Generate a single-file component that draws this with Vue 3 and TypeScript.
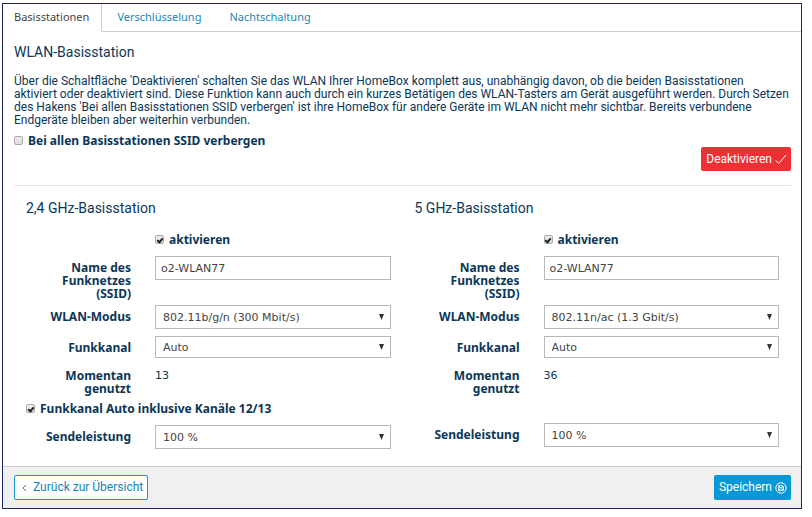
<script setup lang="ts">
import { reactive, ref } from 'vue'

interface Station {
  id: string
  title: string
  active: boolean
  ssid: string
  mode: string
  modes: string[]
  channel: string
  current: string
  autoExtended: boolean | null
  power: string
}

const tabs = ['Basisstationen', 'Verschlüsselung', 'Nachtschaltung']
const activeTab = ref('Basisstationen')
const hideSsid = ref(false)
const channels = ['Auto']
const powers = ['100 %']

const stations = reactive<Station[]>([
  {
    id: 'g24',
    title: '2,4 GHz-Basisstation',
    active: true,
    ssid: 'o2-WLAN77',
    mode: '802.11b/g/n (300 Mbit/s)',
    modes: ['802.11b/g/n (300 Mbit/s)'],
    channel: 'Auto',
    current: '13',
    autoExtended: true,
    power: '100 %',
  },
  {
    id: 'g5',
    title: '5 GHz-Basisstation',
    active: true,
    ssid: 'o2-WLAN77',
    mode: '802.11n/ac (1.3 Gbit/s)',
    modes: ['802.11n/ac (1.3 Gbit/s)'],
    channel: 'Auto',
    current: '36',
    autoExtended: null,
    power: '100 %',
  },
])
</script>

<template>
  <main class="panel">
    <nav class="tabs">
      <a
        v-for="tab in tabs"
        :key="tab"
        href="#"
        class="tab"
        :class="{ current: tab === activeTab }"
        @click.prevent="activeTab = tab"
      >{{ tab }}</a>
    </nav>

    <div class="content">
      <h1>WLAN-Basisstation</h1>
      <p class="intro">
        Über die Schaltfläche 'Deaktivieren' schalten Sie das WLAN Ihrer HomeBox komplett aus, unabhängig davon, ob die beiden Basisstationen<br />
        aktiviert oder deaktiviert sind. Diese Funktion kann auch durch ein kurzes Betätigen des WLAN-Tasters am Gerät ausgeführt werden. Durch Setzen<br />
        des Hakens 'Bei allen Basisstationen SSID verbergen' ist ihre HomeBox für andere Geräte im WLAN nicht mehr sichtbar. Bereits verbundene<br />
        Endgeräte bleiben aber weiterhin verbunden.
      </p>
      <label class="check"><input v-model="hideSsid" type="checkbox" />Bei allen Basisstationen SSID verbergen</label>
      <div class="actions">
        <button type="button" class="btn danger">
          Deaktivieren
          <svg width="12" height="12" viewBox="0 0 12 12" fill="none" stroke="currentColor"><path d="M1 7.5 3.8 10.5 11 2" /></svg>
        </button>
      </div>

      <div class="stations">
        <section v-for="s in stations" :key="s.id" class="station">
          <h2>{{ s.title }}</h2>
          <div class="row">
            <label class="check field"><input v-model="s.active" type="checkbox" />aktivieren</label>
          </div>
          <div class="row ssid">
            <label class="name" :for="s.id + '-ssid'">Name des Funknetzes (SSID)</label>
            <input :id="s.id + '-ssid'" v-model="s.ssid" class="text" type="text" />
          </div>
          <div class="row mode">
            <label class="name" :for="s.id + '-mode'">WLAN-Modus</label>
            <div class="select">
              <select :id="s.id + '-mode'" v-model="s.mode">
                <option v-for="m in s.modes" :key="m">{{ m }}</option>
              </select>
              <svg width="5" height="6" viewBox="0 0 5 6"><path d="M0 0h5L2.5 6z" /></svg>
            </div>
          </div>
          <div class="row channel">
            <label class="name" :for="s.id + '-channel'">Funkkanal</label>
            <div class="select">
              <select :id="s.id + '-channel'" v-model="s.channel">
                <option v-for="c in channels" :key="c">{{ c }}</option>
              </select>
              <svg width="5" height="6" viewBox="0 0 5 6"><path d="M0 0h5L2.5 6z" /></svg>
            </div>
          </div>
          <div class="row used">
            <span class="name">Momentan genutzt</span>
            <span class="value">{{ s.current }}</span>
          </div>
          <div class="extended">
            <label v-if="s.autoExtended !== null" class="check"><input v-model="s.autoExtended" type="checkbox" />Funkkanal Auto inklusive Kanäle 12/13</label>
          </div>
          <div class="row">
            <label class="name" :for="s.id + '-power'">Sendeleistung</label>
            <div class="select">
              <select :id="s.id + '-power'" v-model="s.power">
                <option v-for="p in powers" :key="p">{{ p }}</option>
              </select>
              <svg width="5" height="6" viewBox="0 0 5 6"><path d="M0 0h5L2.5 6z" /></svg>
            </div>
          </div>
        </section>
      </div>
    </div>

    <footer class="footer">
      <button type="button" class="btn back">
        <svg width="5" height="8" viewBox="0 0 5 8" fill="none" stroke="currentColor"><path d="M4 1 1 4l3 3" /></svg>
        Zurück zur Übersicht
      </button>
      <button type="button" class="btn save">
        Speichern
        <svg width="12" height="12" viewBox="0 0 12 12" fill="none" stroke="currentColor"><circle cx="6" cy="6" r="5.2" /><path d="M3.5 3.5h4l1 1v4h-5zM4.5 3.5v2h3v-2M4.5 8.5V7h3v1.5" stroke-width=".8" /></svg>
      </button>
    </footer>
  </main>
</template>

<style>
body {
  background: #fff;
}
</style>

<style scoped>
* {
  box-sizing: border-box;
}

.panel {
  margin: 3px 10px 8px 2px;
  border: 1px solid #1c2462;
  color: #0b3658;
  font: 12px/13px Roboto, Tahoma, sans-serif;
  background: #fff;
}

.tabs {
  display: flex;
  height: 28px;
  font-family: "Noto Sans", Tahoma, sans-serif;
  font-size: 11px;
}

.tab {
  display: flex;
  align-items: center;
  padding: 0 0 3px 28px;
  border-bottom: 1px solid #ccc;
  color: #1586bd;
  text-decoration: none;
}

.tab:last-child {
  flex: 1;
}

.tab.current {
  padding: 0 12px 3px 11px;
  border-right: 1px solid #ccc;
  border-bottom-color: transparent;
  color: #444;
}

.tab.current + .tab {
  padding-left: 15px;
}

.content {
  padding: 12px 10px 17px 11px;
}

h1,
h2 {
  margin: 0;
  font-size: 14px;
  line-height: 16px;
  font-weight: 400;
}

.intro {
  margin: 15px 0 7px;
}

.check {
  display: flex;
  align-items: center;
  gap: 5px;
  font-family: "Noto Sans", Verdana, sans-serif;
  font-weight: 700;
}

.check input {
  appearance: none;
  display: grid;
  flex: none;
  width: 9px;
  height: 9px;
  margin: 0;
  border: 1px solid #aaa;
  border-radius: 2px;
  background: linear-gradient(#eee, #ddd);
}

.check input:checked::after {
  content: "";
  box-sizing: border-box;
  place-self: center;
  width: 4px;
  height: 6px;
  border: solid #222;
  border-width: 0 2px 2px 0;
  transform: rotate(40deg);
}

.actions {
  display: flex;
  justify-content: flex-end;
  padding-bottom: 14px;
  border-bottom: 1px solid #e2e2e2;
}

.btn {
  display: flex;
  align-items: center;
  height: 25px;
  gap: 3px;
  padding: 0 3px 0 4px;
  border: 1px solid transparent;
  border-radius: 2px;
  color: #fff;
  font: inherit;
}

.danger {
  height: 24px;
  background: #ee3035;
}

.stations {
  display: grid;
  grid-template-columns: 1fr 1fr;
}

.station {
  padding: 14px 12px 0;
}

h2 {
  margin-bottom: 17px;
}

.row {
  display: grid;
  grid-template-columns: 105px 1fr;
  column-gap: 24px;
  align-items: start;
}

.field {
  grid-column: 2;
}

.name {
  padding: 5px 0 0 16px;
  font-family: "Noto Sans", Verdana, sans-serif;
  font-weight: 700;
  text-align: right;
}

.text,
select {
  width: 100%;
  min-width: 0;
  height: 24px;
  border: 1px solid #b8b8b8;
  border-radius: 0;
  background: #fff;
  color: #444;
}

.text,
select,
.value {
  font: 11px/13px "DejaVu Sans", Verdana, sans-serif;
}

.text {
  padding: 0 5px;
}

.select {
  display: grid;
  align-items: center;
}

.select select,
.select svg {
  grid-area: 1 / 1;
}

.select select {
  appearance: none;
  padding: 0 20px 0 7px;
}

.select svg {
  justify-self: end;
  margin-right: 7px;
  fill: #333;
  pointer-events: none;
}

.ssid {
  margin-top: 10px;
}

.mode {
  margin-top: 5px;
}

.channel {
  margin-top: 7px;
}

.channel select {
  height: 22px;
}

.used {
  margin-top: 11px;
}

.used .name {
  padding-top: 0;
}

.extended {
  min-height: 28px;
}

.extended .check {
  padding: 7px 0 10px;
}

.footer {
  display: flex;
  justify-content: space-between;
  padding: 8px 10px 8px 11px;
  border-top: 1px solid #ccc;
  background: #f0f0f0;
}

.back {
  padding: 0 4px 0 7px;
  gap: 6px;
  border-color: #1695c0;
  background: #fff;
  color: #1586bd;
}

.save {
  background: #0798d7;
}
</style>
